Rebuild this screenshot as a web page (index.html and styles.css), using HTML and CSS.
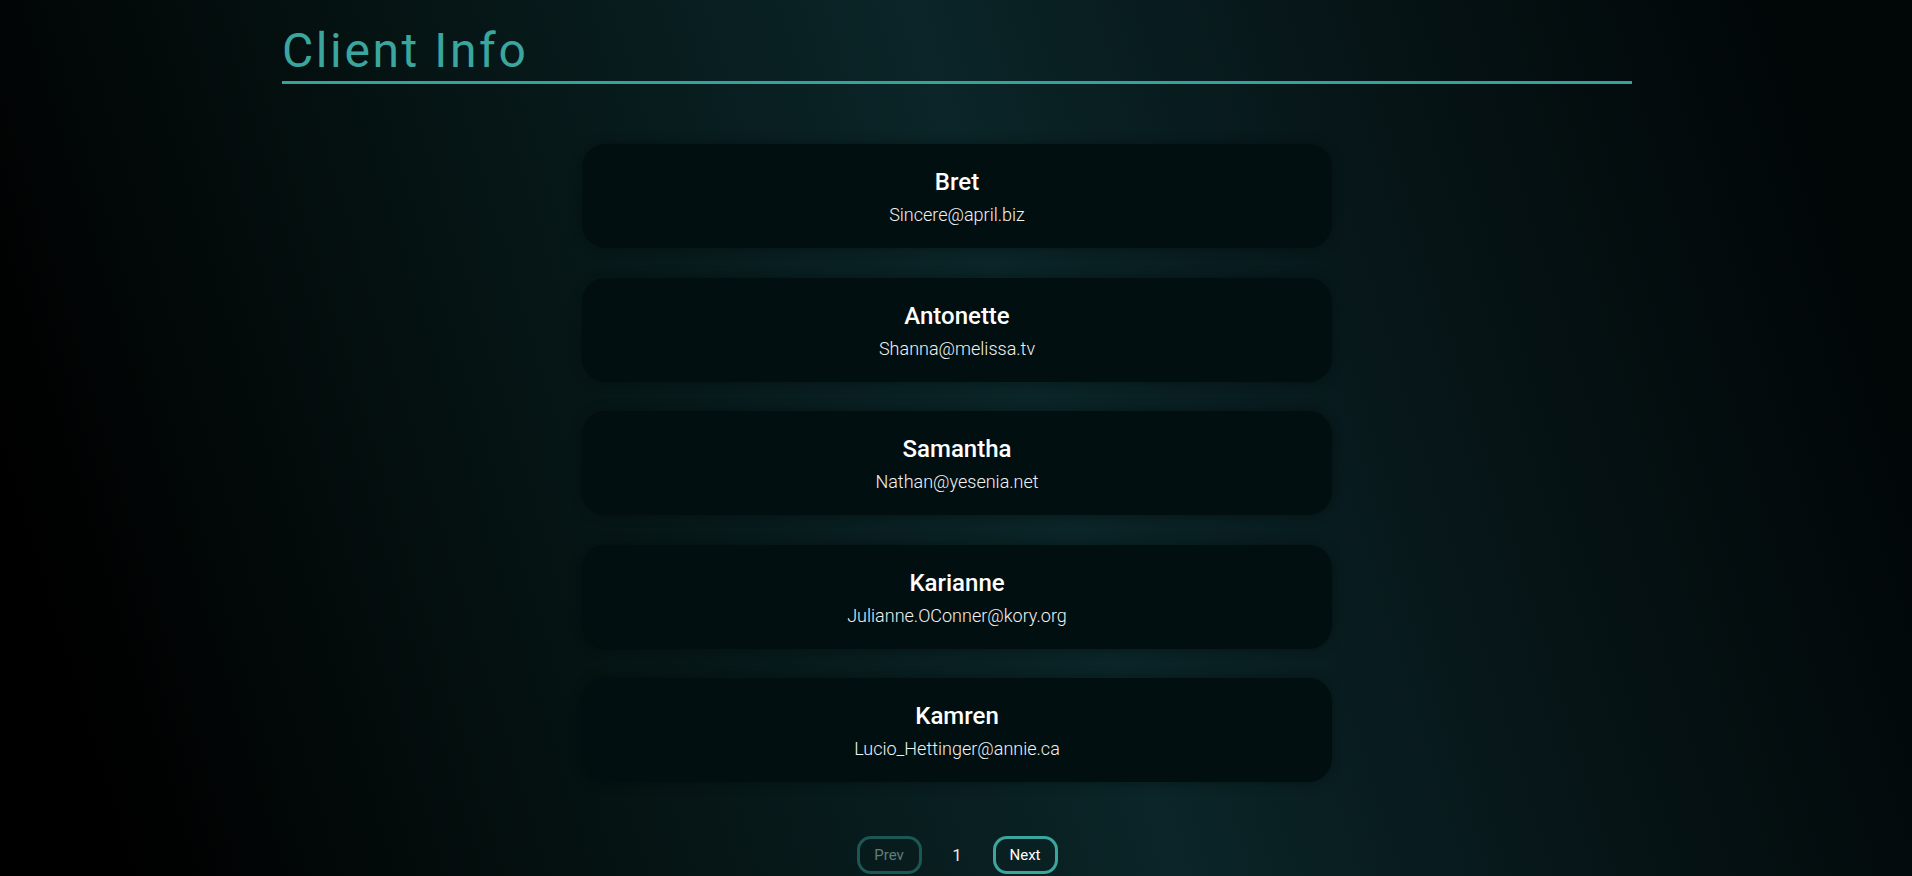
FILE: index.html
```html
<!DOCTYPE html>
<html lang="en">
<head>
<meta charset="utf-8">
<title>Client Info</title>
<link rel="stylesheet" href="styles.css">
</head>
<body>
<div class="page">
  <header class="header">
    <h1 class="title">Client Info</h1>
  </header>
  <main class="list">
    <div class="card"><div class="name">Bret</div><div class="email">Sincere@april.biz</div></div>
    <div class="card"><div class="name">Antonette</div><div class="email">Shanna@melissa.tv</div></div>
    <div class="card"><div class="name">Samantha</div><div class="email">Nathan@yesenia.net</div></div>
    <div class="card"><div class="name">Karianne</div><div class="email">Julianne.OConner@kory.org</div></div>
    <div class="card"><div class="name">Kamren</div><div class="email">Lucio_Hettinger@annie.ca</div></div>
  </main>
  <nav class="pager">
    <button class="btn btn-disabled">Prev</button>
    <span class="pagenum">1</span>
    <button class="btn">Next</button>
  </nav>
</div>
</body>
</html>
```
FILE: styles.css
```css
html, body {
  margin: 0;
  padding: 0;
  height: 100%;
  overflow: hidden;
}
body {
  font-family: Roboto, "Liberation Sans", sans-serif;
  color: #ffffff;
  background: linear-gradient(73deg, #000000 6%, #04100f 25%, #0b2528 54%, #061416 75%, #010607 94%);
  min-height: 876px;
}
.page {
  width: 1350px;
  margin: 0 auto;
  padding-left: 2px;
}
.header {
  padding-top: 22px;
  border-bottom: 3px solid #36a39b;
  padding-bottom: 2px;
}
.title {
  margin: 0;
  font-size: 48px;
  font-weight: 400;
  line-height: 57px;
  letter-spacing: 2.6px;
  color: #3aa69d;
}
.list {
  display: flex;
  flex-direction: column;
  align-items: center;
  gap: 29.5px;
  margin-top: 60px;
}
.card {
  width: 750px;
  height: 104px;
  box-sizing: border-box;
  padding-top: 2px;
  background: #020f11;
  border-radius: 24px;
  box-shadow: 0 0 12px rgba(0, 0, 0, 0.35);
  display: flex;
  flex-direction: column;
  align-items: center;
  justify-content: center;
  gap: 8px;
}
.name {
  font-size: 24px;
  font-weight: 500;
  line-height: 28px;
  color: #ffffff;
}
.email {
  font-size: 18px;
  font-weight: 300;
  line-height: 22px;
  color: #f2f2f2;
}
.pager {
  display: flex;
  justify-content: center;
  align-items: center;
  gap: 30px;
  margin-top: 54px;
}
.btn {
  width: 65px;
  height: 38px;
  border: 3px solid #3aa69d;
  border-radius: 14px;
  background: transparent;
  color: #ffffff;
  font-family: Roboto, "Liberation Sans", sans-serif;
  font-size: 15px;
  padding: 0;
}
.btn-disabled {
  border-color: #1d5753;
  color: #5f7f7d;
}
.pagenum {
  font-size: 17px;
  color: #e8e8e8;
  width: 11px;
  text-align: center;
}
```
